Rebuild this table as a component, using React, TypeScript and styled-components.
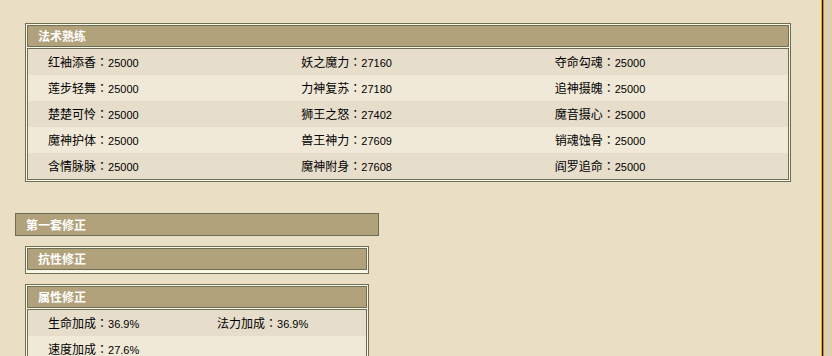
import React from "react";
import styled, { createGlobalStyle } from "styled-components";

const GlobalStyle = createGlobalStyle`
  html, body {
    margin: 0;
    padding: 0;
    background: #eadfc5;
  }
  body {
    font-family: "Noto Sans CJK SC", "Noto Sans", sans-serif;
    font-size: 12px;
    color: #000;
  }
`;

const Page = styled.div`
  display: flex;
  width: 832px;
  height: 356px;
  overflow: hidden;
`;

const Main = styled.main`
  width: 821px;
  flex: none;
  padding-top: 23px;
  box-sizing: border-box;
  display: flex;
  flex-direction: column;
`;

const Rail = styled.div`
  flex: 1;
  background: linear-gradient(
    to right,
    #f2a800 0 1px,
    #141414 1px 2px,
    #c88e10 2px 3px,
    #ddd0b0 3px
  );
`;

const Block = styled.div<{ $indent: number; $top?: number }>`
  padding-left: ${(p) => p.$indent}px;
  margin-top: ${(p) => p.$top ?? 0}px;
`;

const Panel = styled.section<{ $width: number; $bottom?: number }>`
  width: ${(p) => p.$width}px;
  box-sizing: border-box;
  border: 1px solid #6b6f55;
  background: #fbf7e6;
  padding: 1px 1px ${(p) => p.$bottom ?? 1}px;
  display: flex;
  flex-direction: column;
  gap: 1px;
`;

const PanelHead = styled.h3`
  margin: 0;
  height: 20px;
  line-height: 20px;
  border: 1px solid #6b6f55;
  background: #b1a27c;
  color: #fff;
  font-size: 12px;
  font-weight: bold;
  padding-left: 10px;
`;

const Rows = styled.div`
  border: 1px solid #6b6f55;
`;

const Row = styled.div<{ $cols: number }>`
  display: grid;
  grid-template-columns: repeat(${(p) => p.$cols}, 1fr);
  align-items: center;
  height: 26px;
  background: #e7ddcb;
  &:nth-child(even) {
    background: #f1e9d8;
  }
`;

const Cell = styled.div`
  padding-left: 20px;
  white-space: nowrap;
  line-height: 26px;
`;

/* full-width colon drawn centred in its em box */
const Colon = styled.span`
  font-family: "Noto Sans CJK TC", "Noto Sans CJK SC", sans-serif;
`;

const Num = styled.span`
  font-family: "Liberation Sans", Arial, sans-serif;
  font-size: 11px;
`;

const SectionBar = styled.h2`
  margin: 0;
  width: 364px;
  box-sizing: border-box;
  height: 23px;
  line-height: 21px;
  border: 1px solid #6b6f55;
  background: #b1a27c;
  color: #fff;
  font-size: 12px;
  font-weight: bold;
  padding-left: 10px;
`;

const SubStack = styled.div`
  padding-left: 10px;
  display: flex;
  flex-direction: column;
  gap: 10px;
  margin-top: 10px;
`;

type Stat = [string, string];

const skills: Stat[][] = [
  [["红袖添香", "25000"], ["妖之魔力", "27160"], ["夺命勾魂", "25000"]],
  [["莲步轻舞", "25000"], ["力神复苏", "27180"], ["追神摄魄", "25000"]],
  [["楚楚可怜", "25000"], ["狮王之怒", "27402"], ["魔音摄心", "25000"]],
  [["魔神护体", "25000"], ["兽王神力", "27609"], ["销魂蚀骨", "25000"]],
  [["含情脉脉", "25000"], ["魔神附身", "27608"], ["阎罗追命", "25000"]],
];

const attrs: Stat[][] = [
  [["生命加成", "36.9%"], ["法力加成", "36.9%"]],
  [["速度加成", "27.6%"]],
];

function StatRows({ data, cols }: { data: Stat[][]; cols: number }) {
  return (
    <Rows>
      {data.map((row, i) => (
        <Row key={i} $cols={cols}>
          {row.map(([name, value]) => (
            <Cell key={name}>
              {name}
              <Colon>：</Colon>
              <Num>{value}</Num>
            </Cell>
          ))}
        </Row>
      ))}
    </Rows>
  );
}

export default function App() {
  return (
    <>
      <GlobalStyle />
      <Page>
        <Main>
          <Block $indent={25}>
            <Panel $width={766}>
              <PanelHead>法术熟练</PanelHead>
              <StatRows data={skills} cols={3} />
            </Panel>
          </Block>
          <Block $indent={15} $top={31}>
            <SectionBar>第一套修正</SectionBar>
            <SubStack>
              <Panel $width={344} $bottom={3}>
                <PanelHead>抗性修正</PanelHead>
              </Panel>
              <Panel $width={344}>
                <PanelHead>属性修正</PanelHead>
                <StatRows data={attrs} cols={2} />
              </Panel>
            </SubStack>
          </Block>
        </Main>
        <Rail />
      </Page>
    </>
  );
}
